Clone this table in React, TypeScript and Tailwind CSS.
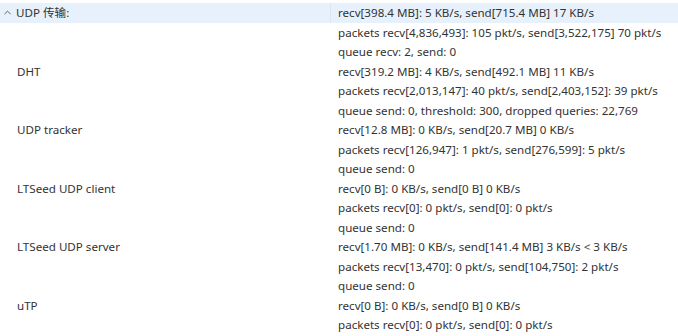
import { ChevronUp } from "lucide-react";

interface Group {
  label: string;
  lines: string[];
}

const groups: Group[] = [
  {
    label: "DHT",
    lines: [
      "recv[319.2 MB]: 4 KB/s, send[492.1 MB] 11 KB/s",
      "packets recv[2,013,147]: 40 pkt/s, send[2,403,152]: 39 pkt/s",
      "queue send: 0, threshold: 300, dropped queries: 22,769",
    ],
  },
  {
    label: "UDP tracker",
    lines: [
      "recv[12.8 MB]: 0 KB/s, send[20.7 MB] 0 KB/s",
      "packets recv[126,947]: 1 pkt/s, send[276,599]: 5 pkt/s",
      "queue send: 0",
    ],
  },
  {
    label: "LTSeed UDP client",
    lines: [
      "recv[0 B]: 0 KB/s, send[0 B] 0 KB/s",
      "packets recv[0]: 0 pkt/s, send[0]: 0 pkt/s",
      "queue send: 0",
    ],
  },
  {
    label: "LTSeed UDP server",
    lines: [
      "recv[1.70 MB]: 0 KB/s, send[141.4 MB] 3 KB/s < 3 KB/s",
      "packets recv[13,470]: 0 pkt/s, send[104,750]: 2 pkt/s",
      "queue send: 0",
    ],
  },
  {
    label: "uTP",
    lines: [
      "recv[0 B]: 0 KB/s, send[0 B] 0 KB/s",
      "packets recv[0]: 0 pkt/s, send[0]: 0 pkt/s",
    ],
  },
];

const header = [
  "recv[398.4 MB]: 5 KB/s, send[715.4 MB] 17 KB/s",
  "packets recv[4,836,493]: 105 pkt/s, send[3,522,175] 70 pkt/s",
  "queue recv: 2, send: 0",
];

function Row({ label, value, first }: { label?: React.ReactNode; value: string; first?: boolean }) {
  return (
    <div className={`flex h-[19.5px] items-center ${first ? "bg-[#e7f1fc]" : ""}`}>
      <div className={`w-[331px] shrink-0 ${first ? "border-r border-[#dde6f0]" : ""} h-full flex items-center`}>
        {label}
      </div>
      <div className="pl-[7px] whitespace-nowrap">{value}</div>
    </div>
  );
}

export default function App() {
  return (
    <div
      className="w-[678px] h-[336px] overflow-hidden bg-white pt-[3px] text-[11.6px] text-[#333333]"
      style={{ fontFamily: '"Noto Sans", "Noto Sans CJK SC", sans-serif' }}
    >
      {header.map((line, i) => (
        <Row
          key={line}
          first={i === 0}
          value={line}
          label={
            i === 0 ? (
              <span className="flex items-center">
                <ChevronUp className="ml-[2px] mr-[3px] h-[11px] w-[11px] text-[#555]" strokeWidth={2} />
                UDP 传输:
              </span>
            ) : undefined
          }
        />
      ))}
      {groups.map((g) =>
        g.lines.map((line, i) => (
          <Row
            key={g.label + i}
            value={line}
            label={i === 0 ? <span className="pl-[17px]">{g.label}</span> : undefined}
          />
        ))
      )}
    </div>
  );
}
